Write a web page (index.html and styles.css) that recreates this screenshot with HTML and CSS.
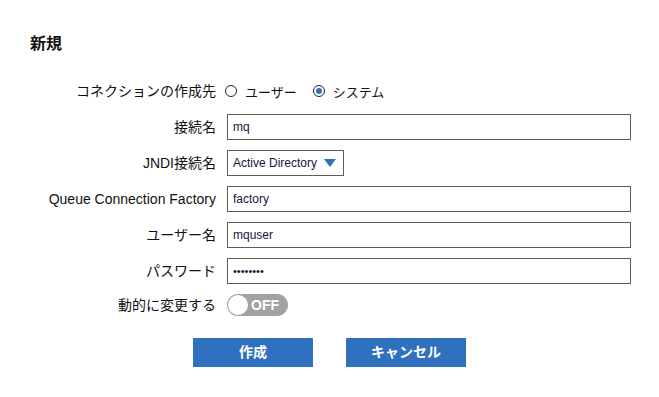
FILE: index.html
```html
<!DOCTYPE html>
<html lang="ja">
<head>
    <meta charset="UTF-8">
    <meta name="viewport" content="width=device-width, initial-scale=1.0">
    <title>新規</title>
    <link rel="stylesheet" href="styles.css">
</head>
<body>
    <div class="page">
        <h1 class="page-title">新規</h1>
        <form class="conn-form" onsubmit="return false;">
            <label class="conn-label">コネクションの作成先</label>
            <div class="conn-field radio-group">
                <label class="radio-item"><input type="radio" name="owner" value="user"><span class="radio-mark"></span>ユーザー</label>
                <label class="radio-item"><input type="radio" name="owner" value="system" checked><span class="radio-mark"></span>システム</label>
            </div>

            <label class="conn-label" for="name">接続名</label>
            <div class="conn-field"><input class="conn-input" id="name" type="text" value="mq"></div>

            <label class="conn-label">JNDI接続名</label>
            <div class="conn-field">
                <div class="conn-select">
                    <span>Active Directory</span>
                    <span class="select-arrow"></span>
                </div>
            </div>

            <label class="conn-label" for="factory">Queue Connection Factory</label>
            <div class="conn-field"><input class="conn-input" id="factory" type="text" value="factory"></div>

            <label class="conn-label" for="user">ユーザー名</label>
            <div class="conn-field"><input class="conn-input" id="user" type="text" value="mquser"></div>

            <label class="conn-label" for="pass">パスワード</label>
            <div class="conn-field"><input class="conn-input pass-input" id="pass" type="text" value="••••••••"></div>

            <label class="conn-label toggle-label">動的に変更する</label>
            <div class="conn-field toggle-field">
                <span class="toggle">
                    <span class="toggle-knob"></span>
                    <span class="toggle-text">OFF</span>
                </span>
            </div>
        </form>
        <div class="conn-buttons">
            <a class="btn" href="javascript:;">作成</a>
            <a class="btn" href="javascript:;">キャンセル</a>
        </div>
    </div>
</body>
</html>
```

FILE: styles.css
```css
*{
    margin: 0;
    padding: 0;
    box-sizing: border-box;
}
body{
    background-color: #fff;
    color: #111;
    font-family: "Liberation Sans", "Noto Sans CJK JP", sans-serif;
    font-size: 14px;
}
.page{
    width: 659px;
    padding-top: 34px;
}
.page-title{
    margin-left: 30px;
    font-size: 16px;
    line-height: 20px;
    font-weight: bold;
    color: #111;
}
.conn-form{
    display: grid;
    grid-template-columns: 186px 404px;
    column-gap: 11px;
    row-gap: 10px;
    margin-top: 24px;
    padding-left: 30px;
}
.conn-label{
    text-align: right;
    line-height: 26px;
    white-space: nowrap;
}
.conn-field{
    display: flex;
    align-items: center;
    height: 26px;
}
.conn-input{
    width: 100%;
    height: 26px;
    border: 1px solid #5f5f58;
    border-radius: 0;
    padding: 0 5px;
    font-family: "Liberation Sans", "Noto Sans CJK JP", sans-serif;
    font-size: 12px;
    color: #15153a;
    outline: none;
}
.pass-input{
    font-size: 11px;
}
.radio-group{
    gap: 18px;
    font-size: 13px;
}
.radio-item{
    display: flex;
    align-items: center;
    cursor: pointer;
}
.radio-item input{
    display: none;
}
.radio-mark{
    width: 12px;
    height: 12px;
    border: 1px solid #222;
    border-radius: 50%;
    margin-left: -2px;
    margin-right: 8px;
    position: relative;
}
.radio-item input:checked + .radio-mark::after{
    content: "";
    position: absolute;
    left: 2px;
    top: 2px;
    width: 6px;
    height: 6px;
    border-radius: 50%;
    background-color: #2f70bf;
}
.conn-select{
    display: flex;
    align-items: center;
    height: 26px;
    border: 1px solid #5f5f58;
    padding: 0 7px 0 5px;
    font-size: 12px;
    color: #15153a;
    white-space: nowrap;
    cursor: pointer;
}
.select-arrow{
    width: 0;
    height: 0;
    margin-left: 7px;
    border-left: 6px solid transparent;
    border-right: 6px solid transparent;
    border-top: 8px solid #2f70bf;
}
.toggle-label,
.toggle-field{
    line-height: 22px;
    height: 22px;
}
.toggle{
    display: flex;
    align-items: center;
    width: 61px;
    height: 22px;
    border-radius: 11px;
    background-color: #a2a2a2;
    padding-left: 1px;
}
.toggle-knob{
    width: 20px;
    height: 20px;
    border-radius: 50%;
    background-color: #fff;
}
.toggle-text{
    margin-left: 3px;
    color: #fff;
    font-weight: bold;
    font-size: 14px;
}
.conn-buttons{
    display: flex;
    justify-content: center;
    gap: 33px;
    margin-top: 22px;
}
.btn{
    display: block;
    width: 120px;
    height: 29px;
    line-height: 29px;
    text-align: center;
    text-decoration: none;
    background-color: #2f70bf;
    color: #fff;
    font-weight: bold;
    font-size: 14px;
}
```
